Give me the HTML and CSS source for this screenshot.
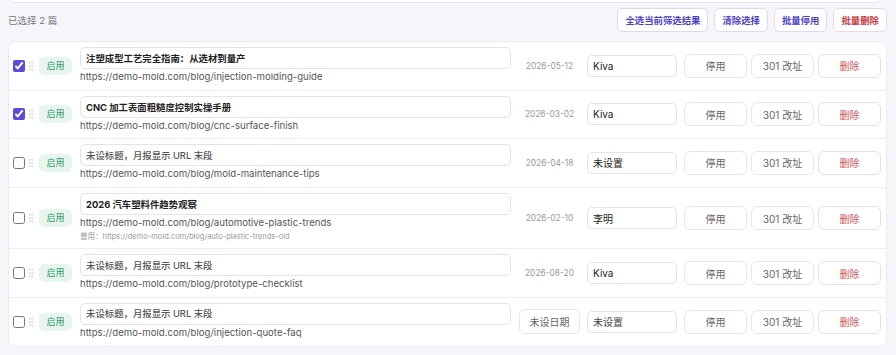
FILE: index.html
```html
<!DOCTYPE html>
<html lang="zh-CN">
<head>
    <meta charset="UTF-8">
    <meta name="viewport" content="width=device-width, initial-scale=1.0">
    <title>文章管理</title>
    <link rel="stylesheet" href="styles.css">
</head>
<body>
    <div class="prev-card"></div>

    <div class="toolbar">
        <span class="selected-count">已选择 2 篇</span>
        <div class="bulk-actions">
            <button class="tool-btn">全选当前筛选结果</button>
            <button class="tool-btn">清除选择</button>
            <button class="tool-btn">批量停用</button>
            <button class="tool-btn danger">批量删除</button>
        </div>
    </div>

    <div class="post-list">
        <div class="post-row">
            <input type="checkbox" class="row-check" checked>
            <span class="drag-handle"><svg width="4" height="8" viewBox="0 0 4 8"><circle cx="0.8" cy="0.8" r="0.8"/><circle cx="3.2" cy="0.8" r="0.8"/><circle cx="0.8" cy="4" r="0.8"/><circle cx="3.2" cy="4" r="0.8"/><circle cx="0.8" cy="7.2" r="0.8"/><circle cx="3.2" cy="7.2" r="0.8"/></svg></span>
            <span class="status-badge">启用</span>
            <div class="post-main">
                <input type="text" class="title-input" value="注塑成型工艺完全指南：从选材到量产">
                <div class="post-url">https://demo-mold.com/blog/injection-molding-guide</div>
            </div>
            <div class="post-date">2026-05-12</div>
            <input type="text" class="author-input" value="Kiva">
            <div class="row-actions">
                <button class="row-btn">停用</button>
                <button class="row-btn">301 改址</button>
                <button class="row-btn danger">删除</button>
            </div>
        </div>

        <div class="post-row">
            <input type="checkbox" class="row-check" checked>
            <span class="drag-handle"><svg width="4" height="8" viewBox="0 0 4 8"><circle cx="0.8" cy="0.8" r="0.8"/><circle cx="3.2" cy="0.8" r="0.8"/><circle cx="0.8" cy="4" r="0.8"/><circle cx="3.2" cy="4" r="0.8"/><circle cx="0.8" cy="7.2" r="0.8"/><circle cx="3.2" cy="7.2" r="0.8"/></svg></span>
            <span class="status-badge">启用</span>
            <div class="post-main">
                <input type="text" class="title-input" value="CNC 加工表面粗糙度控制实操手册">
                <div class="post-url">https://demo-mold.com/blog/cnc-surface-finish</div>
            </div>
            <div class="post-date">2026-03-02</div>
            <input type="text" class="author-input" value="Kiva">
            <div class="row-actions">
                <button class="row-btn">停用</button>
                <button class="row-btn">301 改址</button>
                <button class="row-btn danger">删除</button>
            </div>
        </div>

        <div class="post-row">
            <input type="checkbox" class="row-check">
            <span class="drag-handle"><svg width="4" height="8" viewBox="0 0 4 8"><circle cx="0.8" cy="0.8" r="0.8"/><circle cx="3.2" cy="0.8" r="0.8"/><circle cx="0.8" cy="4" r="0.8"/><circle cx="3.2" cy="4" r="0.8"/><circle cx="0.8" cy="7.2" r="0.8"/><circle cx="3.2" cy="7.2" r="0.8"/></svg></span>
            <span class="status-badge">启用</span>
            <div class="post-main">
                <input type="text" class="title-input" placeholder="未设标题，月报显示 URL 末段">
                <div class="post-url">https://demo-mold.com/blog/mold-maintenance-tips</div>
            </div>
            <div class="post-date">2026-04-18</div>
            <input type="text" class="author-input" value="未设置">
            <div class="row-actions">
                <button class="row-btn">停用</button>
                <button class="row-btn">301 改址</button>
                <button class="row-btn danger">删除</button>
            </div>
        </div>

        <div class="post-row">
            <input type="checkbox" class="row-check">
            <span class="drag-handle"><svg width="4" height="8" viewBox="0 0 4 8"><circle cx="0.8" cy="0.8" r="0.8"/><circle cx="3.2" cy="0.8" r="0.8"/><circle cx="0.8" cy="4" r="0.8"/><circle cx="3.2" cy="4" r="0.8"/><circle cx="0.8" cy="7.2" r="0.8"/><circle cx="3.2" cy="7.2" r="0.8"/></svg></span>
            <span class="status-badge">启用</span>
            <div class="post-main">
                <input type="text" class="title-input" value="2026 汽车塑料件趋势观察">
                <div class="post-url">https://demo-mold.com/blog/automotive-plastic-trends</div>
                <div class="old-url">曾用：https://demo-mold.com/blog/auto-plastic-trends-old</div>
            </div>
            <div class="post-date">2026-02-10</div>
            <input type="text" class="author-input" value="李明">
            <div class="row-actions">
                <button class="row-btn">停用</button>
                <button class="row-btn">301 改址</button>
                <button class="row-btn danger">删除</button>
            </div>
        </div>

        <div class="post-row">
            <input type="checkbox" class="row-check">
            <span class="drag-handle"><svg width="4" height="8" viewBox="0 0 4 8"><circle cx="0.8" cy="0.8" r="0.8"/><circle cx="3.2" cy="0.8" r="0.8"/><circle cx="0.8" cy="4" r="0.8"/><circle cx="3.2" cy="4" r="0.8"/><circle cx="0.8" cy="7.2" r="0.8"/><circle cx="3.2" cy="7.2" r="0.8"/></svg></span>
            <span class="status-badge">启用</span>
            <div class="post-main">
                <input type="text" class="title-input" placeholder="未设标题，月报显示 URL 末段">
                <div class="post-url">https://demo-mold.com/blog/prototype-checklist</div>
            </div>
            <div class="post-date">2026-08-20</div>
            <input type="text" class="author-input" value="Kiva">
            <div class="row-actions">
                <button class="row-btn">停用</button>
                <button class="row-btn">301 改址</button>
                <button class="row-btn danger">删除</button>
            </div>
        </div>

        <div class="post-row">
            <input type="checkbox" class="row-check">
            <span class="drag-handle"><svg width="4" height="8" viewBox="0 0 4 8"><circle cx="0.8" cy="0.8" r="0.8"/><circle cx="3.2" cy="0.8" r="0.8"/><circle cx="0.8" cy="4" r="0.8"/><circle cx="3.2" cy="4" r="0.8"/><circle cx="0.8" cy="7.2" r="0.8"/><circle cx="3.2" cy="7.2" r="0.8"/></svg></span>
            <span class="status-badge">启用</span>
            <div class="post-main">
                <input type="text" class="title-input" placeholder="未设标题，月报显示 URL 末段">
                <div class="post-url">https://demo-mold.com/blog/injection-quote-faq</div>
            </div>
            <div class="post-date"><button class="date-btn">未设日期</button></div>
            <input type="text" class="author-input" placeholder="未设置">
            <div class="row-actions">
                <button class="row-btn">停用</button>
                <button class="row-btn">301 改址</button>
                <button class="row-btn danger">删除</button>
            </div>
        </div>
    </div>
</body>
</html>
```

FILE: styles.css
```css
body {
    font-family: Inter, "Noto Sans CJK SC", sans-serif;
    margin: 0;
    padding: 0 9px 0 8px;
    background-color: #f6f6fa;
    color: #222;
    font-size: 10px;
}

button,
input {
    font-family: inherit;
}

.prev-card {
    height: 2px;
    margin: 0 8px 0 3px;
    background-color: white;
    border: 1px solid #e6e6ef;
    border-top: none;
    border-radius: 0 0 6px 6px;
}

.toolbar {
    display: flex;
    align-items: center;
    justify-content: space-between;
    margin-top: 5px;
    height: 24px;
}

.selected-count {
    color: #777;
    font-size: 9.5px;
}

.bulk-actions {
    display: flex;
    gap: 6px;
}

.tool-btn {
    height: 24px;
    padding: 0 7px;
    background-color: white;
    border: 1px solid #dcd9f0;
    border-radius: 5px;
    color: #4d42c6;
    font-size: 9.4px;
    font-weight: 600;
    cursor: pointer;
}

.tool-btn.danger {
    color: #c63c3f;
    border-color: #f1d9da;
}

.post-list {
    margin-top: 9px;
    background-color: white;
    border: 1px solid #ebebf2;
    border-radius: 8px;
}

.post-row {
    display: flex;
    align-items: center;
    padding: 5px 6px 5px 4px;
    border-bottom: 1px solid #ededf3;
}

.post-row:last-child {
    border-bottom: none;
}

.post-row > * {
    flex-shrink: 0;
}

.row-check {
    width: 12px;
    height: 12px;
    margin: 0;
    accent-color: #5b4bd8;
}

.drag-handle {
    display: flex;
    margin-left: 4px;
    fill: #c3c3cc;
}

.status-badge {
    margin-left: 6px;
    width: 33px;
    height: 18px;
    line-height: 18px;
    text-align: center;
    background-color: #e6f6ee;
    color: #2f9665;
    border-radius: 6px;
    font-size: 9px;
}

.post-main {
    margin-left: 8px;
    width: 431px;
}

.title-input {
    display: block;
    box-sizing: border-box;
    width: 100%;
    height: 22px;
    padding: 0 5px;
    border: 1px solid #e3e3ec;
    border-radius: 5px;
    font-size: 9.4px;
    font-weight: 700;
    color: #222;
}

.title-input::placeholder {
    color: #555;
    font-weight: 500;
}

.post-url {
    margin-top: 1px;
    line-height: 14.6px;
    color: #555;
    font-size: 9.6px;
}

.old-url {
    line-height: 13px;
    color: #999;
    font-size: 7.5px;
}

.post-date {
    width: 61px;
    margin-left: 8px;
    text-align: center;
    color: #999;
    font-size: 8.4px;
}

.date-btn {
    width: 61px;
    height: 25px;
    background-color: white;
    border: 1px solid #e6e6ee;
    border-radius: 6px;
    color: #666;
    font-size: 10px;
}

.author-input {
    box-sizing: border-box;
    width: 90px;
    height: 22px;
    margin-left: 7px;
    padding: 0 5px;
    border: 1px solid #e3e3ec;
    border-radius: 5px;
    font-size: 10px;
    color: #222;
}

.author-input::placeholder {
    color: #444;
}

.row-actions {
    display: flex;
    gap: 4px;
    margin-left: 7px;
}

.row-btn {
    width: 63px;
    height: 24px;
    background-color: white;
    border: 1px solid #e6e6ee;
    border-radius: 6px;
    color: #666;
    font-size: 10px;
    cursor: pointer;
}

.row-btn.danger {
    color: #d05a5c;
    border-color: #f2dcdd;
}
```
